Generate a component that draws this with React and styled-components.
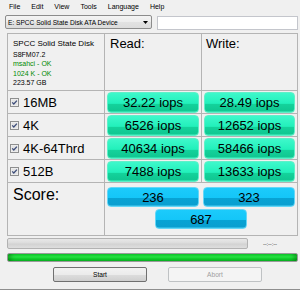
import React from "react";
import styled, { createGlobalStyle } from "styled-components";

const Global = createGlobalStyle`
  html, body { margin: 0; padding: 0; background: #f0f0f0; }
  body { font-family: "Liberation Sans", Arial, sans-serif; color: #000; }
  * { box-sizing: border-box; }
`;

const Window = styled.div`
  width: 300px;
  height: 290px;
  background: #f0f0f0;
  overflow: hidden;
  display: flex;
  flex-direction: column;
`;

const MenuBar = styled.div`
  height: 13px;
  display: flex;
  align-items: center;
  gap: 11px;
  padding-left: 9px;
  font-size: 7px;
`;

const MenuItem = styled.span`
  line-height: 13px;
`;

const ToolRow = styled.div`
  margin-top: 2px;
  height: 14px;
  display: flex;
  gap: 5px;
  padding-left: 5px;
`;

const Combo = styled.div`
  width: 147px;
  height: 14px;
  border: 1px solid #8c8c8c;
  border-radius: 2px;
  background: linear-gradient(#f4f4f4, #ececec 50%, #e2e2e2 51%, #dcdcdc);
  display: flex;
  align-items: center;
  justify-content: space-between;
  padding: 0 3px 0 2px;
  font-size: 6.6px;
`;

const TextBox = styled.div`
  width: 141px;
  height: 14px;
  margin-top: 1px;
  border: 1px solid #c4c6cc;
  background: #fff;
`;

const Grid = styled.div`
  margin: 4px 0 0 7px;
  width: 291px;
  display: grid;
  grid-template-columns: 97px 97px 96px;
  grid-template-rows: 57px repeat(4, 23px) 53px;
  border-top: 1px solid #b4b4b4;
  border-left: 1px solid #b4b4b4;
`;

const Cell = styled.div`
  border-right: 1px solid #b4b4b4;
  border-bottom: ${(p) => (p.$noBottom ? "none" : "1px solid #b4b4b4")};
  grid-column: ${(p) => p.$span || "auto"};
  display: flex;
  flex-direction: ${(p) => (p.$column ? "column" : "row")};
  align-items: ${(p) => p.$align || "center"};
  padding: ${(p) => p.$pad || "0"};
`;

const InfoTitle = styled.div`
  font-size: 8px;
  line-height: 11px;
  margin-bottom: 1px;
`;

const InfoLine = styled.div`
  font-size: 7px;
  line-height: 9.3px;
  color: ${(p) => (p.$ok ? "#008a00" : "#000")};
`;

const HeadText = styled.div`
  font-size: 13px;
  line-height: 15px;
`;

const Check = styled.svg`
  width: 9px;
  height: 9px;
  flex: none;
  margin-right: 4px;
`;

const RowLabel = styled.span`
  font-size: 13px;
  line-height: 15px;
`;

const ResultBox = styled.div`
  width: ${(p) => p.$w || 92}px;
  height: ${(p) => p.$h || 21}px;
  border-radius: 4px;
  border: 1px solid ${(p) => (p.$blue ? "#64d6f6" : "#5ff0c8")};
  background: ${(p) =>
    p.$blue
      ? "linear-gradient(#1ccbfb, #14c6f8 55%, #08a3d4 57%, #0a9fd0 92%, #3cc4ec)"
      : "linear-gradient(#3ef8cb, #22f0bb 55%, #14d39c 57%, #10c892 92%, #3ae8b8)"};
  display: flex;
  align-items: center;
  justify-content: center;
  font-size: 13px;
  line-height: 15px;
  flex: none;
`;

const ScoreLabel = styled.div`
  font-size: 16px;
  line-height: 18px;
`;

const ScoreArea = styled.div`
  width: 100%;
  display: flex;
  flex-direction: column;
  align-items: center;
  gap: 2px;
  padding-top: 4px;
`;

const ScorePair = styled.div`
  display: flex;
  gap: 4px;
  padding-left: 2px;
  align-self: flex-start;
`;

const ProgressRow = styled.div`
  margin-top: 2px;
  padding-left: 7px;
  display: flex;
  align-items: center;
  height: 11px;
`;

const GrayBar = styled.div`
  width: 241px;
  height: 11px;
  border: 1px solid #b2b2b2;
  border-radius: 2px;
  background: linear-gradient(#e8e8e8, #dcdcdc 45%, #d2d2d2 55%, #dedede);
`;

const Timer = styled.span`
  margin-left: 15px;
  font-size: 6px;
  color: #333;
  letter-spacing: -0.2px;
`;

const GreenBar = styled.div`
  margin: 4px 0 0 7px;
  width: 291px;
  height: 10px;
  border: 1px solid #9a9a9a;
  border-radius: 2px;
  background: linear-gradient(#0fc82b, #28e244 45%, #16d431 55%, #08b422);
  box-shadow: inset 6px 0 4px -3px rgba(0, 80, 0, 0.4), inset -6px 0 4px -3px rgba(0, 80, 0, 0.4);
`;

const ButtonRow = styled.div`
  margin-top: 5px;
  display: flex;
  gap: 21px;
  padding-left: 53px;
`;

const Button = styled.div`
  width: 94px;
  height: 15px;
  border: 1px solid ${(p) => (p.$disabled ? "#bfc2c4" : "#707070")};
  border-radius: 2px;
  background: ${(p) =>
    p.$disabled ? "#f4f4f4" : "linear-gradient(#f2f2f2, #ebebeb 50%, #dddddd 51%, #cfcfcf)"};
  color: ${(p) => (p.$disabled ? "#a0a0a0" : "#000")};
  font-size: 6.6px;
  display: flex;
  align-items: center;
  justify-content: center;
`;

const BottomLine = styled.div`
  margin-top: 7px;
  height: 1px;
  background: #8e8e8e;
`;

const CheckIcon = () => (
  <Check viewBox="0 0 9 9">
    <rect x="0.5" y="0.5" width="8" height="8" fill="#f4f4f4" stroke="#8e8f8f" />
    <rect x="1.5" y="1.5" width="6" height="6" fill="#e4e4e4" />
    <path d="M2.2 4.4 L3.8 6 L6.9 2.6" fill="none" stroke="#3d4d7a" strokeWidth="1.3" />
  </Check>
);

const rows = [
  ["16MB", "32.22 iops", "28.49 iops"],
  ["4K", "6526 iops", "12652 iops"],
  ["4K-64Thrd", "40634 iops", "58466 iops"],
  ["512B", "7488 iops", "13633 iops"],
];

export default function App() {
  return (
    <Window>
      <Global />
      <MenuBar>
        {["File", "Edit", "View", "Tools", "Language", "Help"].map((m) => (
          <MenuItem key={m}>{m}</MenuItem>
        ))}
      </MenuBar>
      <ToolRow>
        <Combo>
          <span>E: SPCC Solid State Disk ATA Device</span>
          <svg width="5" height="3" viewBox="0 0 5 3">
            <path d="M0 0 H5 L2.5 3 Z" fill="#000" />
          </svg>
        </Combo>
        <TextBox />
      </ToolRow>
      <Grid>
        <Cell $column $align="flex-start" $pad="4px 0 0 5px">
          <InfoTitle>SPCC Solid State Disk</InfoTitle>
          <InfoLine>S8FM07.2</InfoLine>
          <InfoLine $ok>msahci - OK</InfoLine>
          <InfoLine $ok>1024 K - OK</InfoLine>
          <InfoLine>223.57 GB</InfoLine>
        </Cell>
        <Cell $align="flex-start" $pad="2px 0 0 5px">
          <HeadText>Read:</HeadText>
        </Cell>
        <Cell $align="flex-start" $pad="2px 0 0 4px">
          <HeadText>Write:</HeadText>
        </Cell>
        {rows.map(([label, r, w]) => (
          <React.Fragment key={label}>
            <Cell $pad="0 0 0 2px">
              <CheckIcon />
              <RowLabel>{label}</RowLabel>
            </Cell>
            <Cell $pad="0 0 0 2px">
              <ResultBox>{r}</ResultBox>
            </Cell>
            <Cell $pad="0 0 0 2px">
              <ResultBox $w={91}>{w}</ResultBox>
            </Cell>
          </React.Fragment>
        ))}
        <Cell $align="flex-start" $pad="3px 0 0 5px">
          <ScoreLabel>Score:</ScoreLabel>
        </Cell>
        <Cell $span="span 2" $align="flex-start">
          <ScoreArea>
            <ScorePair>
              <ResultBox $blue $h={20}>236</ResultBox>
              <ResultBox $blue $h={20}>323</ResultBox>
            </ScorePair>
            <ResultBox $blue $h={20}>687</ResultBox>
          </ScoreArea>
        </Cell>
      </Grid>
      <ProgressRow>
        <GrayBar />
        <Timer>--:--:--</Timer>
      </ProgressRow>
      <GreenBar />
      <ButtonRow>
        <Button>Start</Button>
        <Button $disabled>Abort</Button>
      </ButtonRow>
      <BottomLine />
    </Window>
  );
}
